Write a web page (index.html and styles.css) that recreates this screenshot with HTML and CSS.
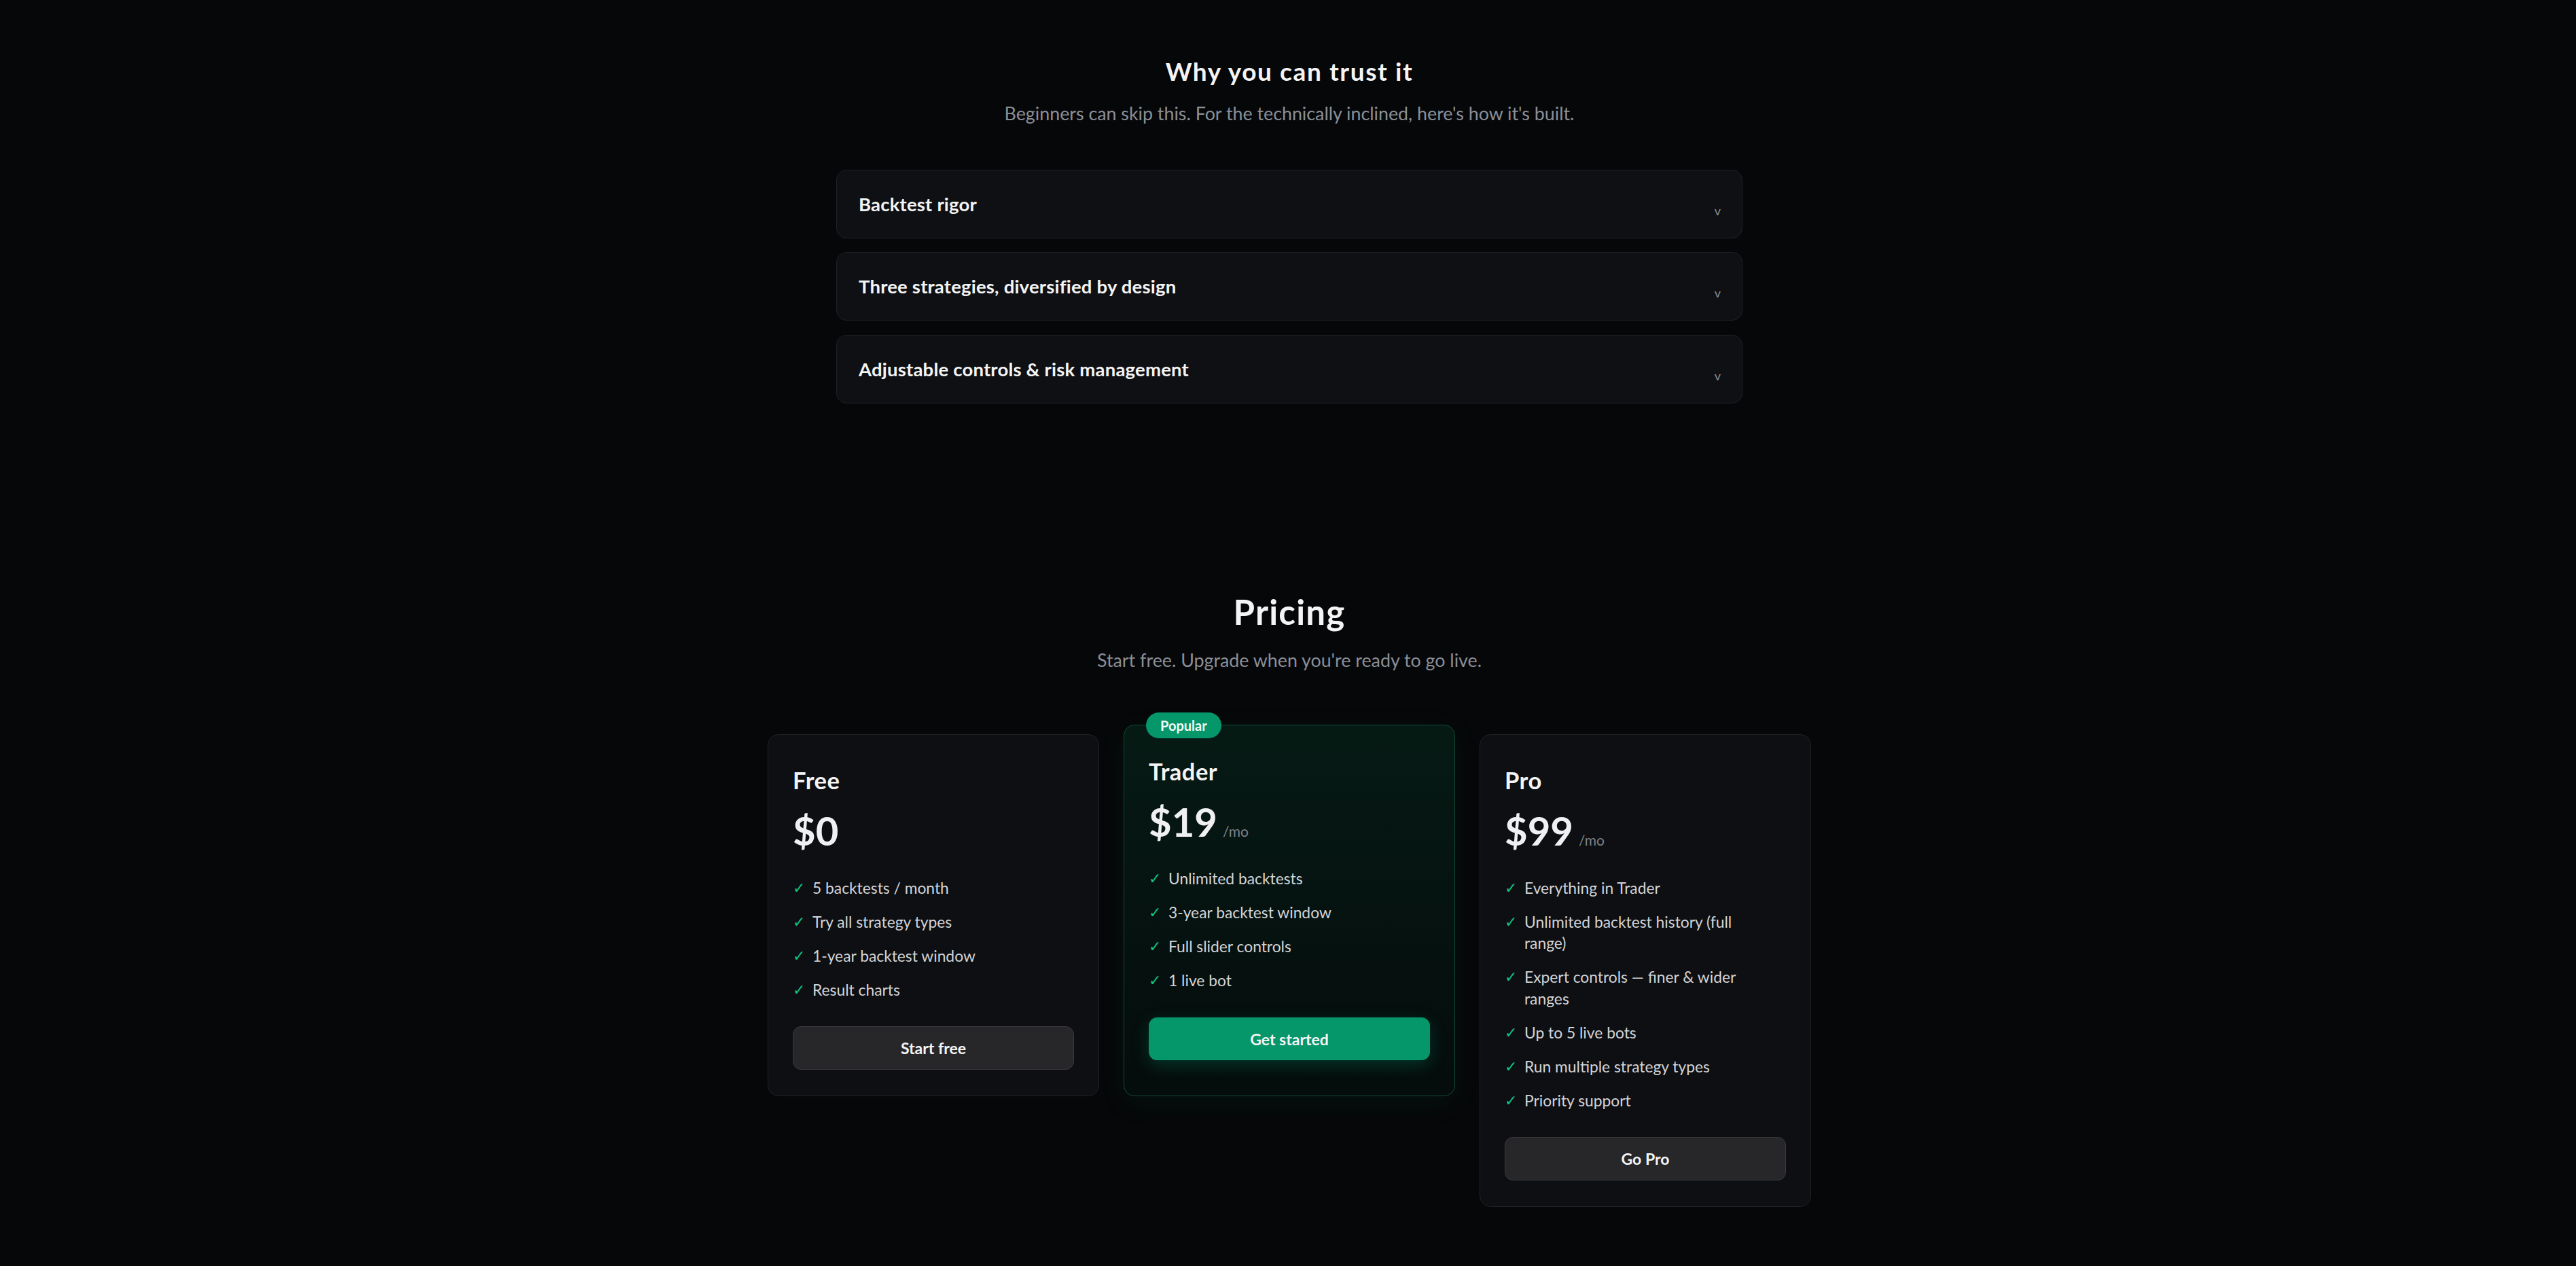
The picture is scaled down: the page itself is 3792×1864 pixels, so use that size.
FILE: index.html
```html
<!DOCTYPE html>
<html>
  <head>
    <link rel="stylesheet" href="styles.css">
  </head>

  <body>
    <section class="trust">
      <h2 class="sectionTitle">Why you can trust it</h2>
      <p class="sectionSub">Beginners can skip this. For the technically inclined, here's how it's built.</p>

      <div class="faq">
        <div class="faqItem">
          <span class="faqLabel">Backtest rigor</span>
          <span class="chev">v</span>
        </div>
        <div class="faqItem">
          <span class="faqLabel">Three strategies, diversified by design</span>
          <span class="chev">v</span>
        </div>
        <div class="faqItem">
          <span class="faqLabel">Adjustable controls &amp; risk management</span>
          <span class="chev">v</span>
        </div>
      </div>
    </section>

    <section class="pricing">
      <h2 class="sectionTitle big">Pricing</h2>
      <p class="sectionSub">Start free. Upgrade when you're ready to go live.</p>

      <div class="plans">
        <div class="plan">
          <h3 class="planName">Free</h3>
          <div class="price">$0</div>
          <ul class="features">
            <li><span class="tick">✓</span><span>5 backtests / month</span></li>
            <li><span class="tick">✓</span><span>Try all strategy types</span></li>
            <li><span class="tick">✓</span><span>1-year backtest window</span></li>
            <li><span class="tick">✓</span><span>Result charts</span></li>
          </ul>
          <button class="planBtn">Start free</button>
        </div>

        <div class="plan popular">
          <span class="badge">Popular</span>
          <h3 class="planName">Trader</h3>
          <div class="price">$19<span class="per">/mo</span></div>
          <ul class="features">
            <li><span class="tick">✓</span><span>Unlimited backtests</span></li>
            <li><span class="tick">✓</span><span>3-year backtest window</span></li>
            <li><span class="tick">✓</span><span>Full slider controls</span></li>
            <li><span class="tick">✓</span><span>1 live bot</span></li>
          </ul>
          <button class="planBtn primary">Get started</button>
        </div>

        <div class="plan">
          <h3 class="planName">Pro</h3>
          <div class="price">$99<span class="per">/mo</span></div>
          <ul class="features">
            <li><span class="tick">✓</span><span>Everything in Trader</span></li>
            <li><span class="tick">✓</span><span>Unlimited backtest history (full range)</span></li>
            <li><span class="tick">✓</span><span>Expert controls — finer &amp; wider ranges</span></li>
            <li><span class="tick">✓</span><span>Up to 5 live bots</span></li>
            <li><span class="tick">✓</span><span>Run multiple strategy types</span></li>
            <li><span class="tick">✓</span><span>Priority support</span></li>
          </ul>
          <button class="planBtn">Go Pro</button>
        </div>
      </div>
    </section>
  </body>
</html>
```

FILE: styles.css
```css
body {
  font-family: Lato, "Noto Sans", sans-serif;
  background-color: #060709;
  color: #f4f4f5;
  margin: 0;
  padding: 0 0 0 4px;
}

.trust {
  padding-top: 83px;
  text-align: center;
}

.sectionTitle {
  margin: 0 0 20px;
  font-size: 37px;
  line-height: 1.2;
  font-weight: 700;
  letter-spacing: 1.6px;
  color: #f4f4f5;
}

.sectionTitle.big {
  font-size: 51px;
  letter-spacing: 1.2px;
  margin-bottom: 21px;
}

.sectionSub {
  margin: 0;
  font-size: 26.8px;
  line-height: 1.5;
  color: #8a8f98;
}

/* collapsed accordion rows */
.faq {
  width: 1334px;
  margin: 62px auto 0;
  display: flex;
  flex-direction: column;
  gap: 20.5px;
  text-align: left;
}

.faqItem {
  display: flex;
  align-items: center;
  justify-content: space-between;
  padding: 30px 31px 30px 32px;
  background-color: #0e1013;
  border: 1px solid #1f2226;
  border-radius: 15px;
}

.faqLabel {
  font-size: 27.5px;
  line-height: 39px;
  font-weight: 700;
  letter-spacing: 0.2px;
  color: #f4f4f5;
}

.chev {
  font-size: 18px;
  line-height: 18px;
  margin-top: 19px;
  color: #8b8f96;
}

.pricing {
  margin-top: 276px;
  padding-bottom: 90px;
  text-align: center;
}

.plans {
  width: 1536px;
  margin: 89px auto 0;
  display: grid;
  grid-template-columns: repeat(3, 1fr);
  gap: 36px;
  align-items: start;
  text-align: left;
}

.plan {
  position: relative;
  padding: 41.5px 36px 38px;
  background-color: #0d0f12;
  border: 1px solid #1f2226;
  border-radius: 16px;
}

.plan.popular {
  margin-top: -13.5px;
  padding-bottom: 51.5px;
  background: linear-gradient(180deg, #061a14 0%, #050c0c 100%);
  border-color: #0e4a35;
  box-shadow: 0 10px 40px rgba(5, 150, 105, 0.08);
}

.badge {
  position: absolute;
  top: -19px;
  left: 32px;
  padding: 0 21px;
  height: 38px;
  line-height: 38px;
  border-radius: 19px;
  background-color: #059669;
  color: #f4fdf8;
  font-size: 20px;
  font-weight: 700;
}

.planName {
  margin: 0 0 13px;
  font-size: 34.5px;
  line-height: 1.5;
  font-weight: 700;
  letter-spacing: 0.5px;
  color: #f4f4f5;
}

.price {
  font-size: 58px;
  line-height: 1.2;
  font-weight: 700;
  color: #f0f0f2;
}

.per {
  margin-left: 8px;
  font-size: 21px;
  font-weight: 400;
  color: #7d828a;
}

.features {
  list-style: none;
  margin: 34px 0 38px;
  padding: 0 25px 0 0;
  display: flex;
  flex-direction: column;
  gap: 18.5px;
}

.features li {
  display: flex;
  gap: 11px;
  font-size: 22.8px;
  line-height: 31.5px;
  color: #d4d4d8;
}

.tick {
  flex: none;
  width: 18px;
  color: #12c28a;
  font-family: "DejaVu Sans", sans-serif;
  font-size: 22px;
}

.planBtn {
  display: block;
  width: 100%;
  height: 63.5px;
  border: 1px solid #3a3a3e;
  border-radius: 12px;
  background-color: #27272a;
  color: #f4f4f5;
  font-family: Lato, "Noto Sans", sans-serif;
  font-size: 23px;
  font-weight: 700;
  cursor: pointer;
}

.planBtn.primary {
  background-color: #059669;
  border-color: #059669;
  box-shadow: 0 8px 24px rgba(5, 150, 105, 0.28);
}
```
